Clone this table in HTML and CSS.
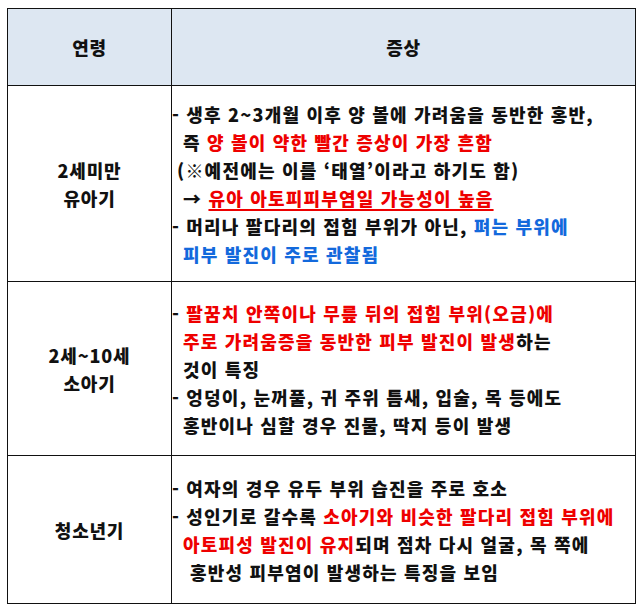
FILE: index.html
```html
<!DOCTYPE html>
<html lang="ko">
<head>
<meta charset="utf-8">
<link rel="stylesheet" href="styles.css">
</head>
<body>
<table class="sym">
  <tr class="head">
    <th class="age">연령</th>
    <th class="desc-h">증상</th>
  </tr>
  <tr class="r1">
    <td class="age">2세미만<br>유아기</td>
    <td class="desc">
      <div class="ln">- 생후 2~3개월 이후 양 볼에 가려움을 동반한 홍반,</div>
      <div class="ln in2">즉 <span class="red">양 볼이 약한 빨간 증상이 가장 흔함</span></div>
      <div class="ln in1">(※예전에는 이를 ‘태열’이라고 하기도 함)</div>
      <div class="ln in2">→ <span class="red ul">유아 아토피피부염일 가능성이 높음</span></div>
      <div class="ln">- 머리나 팔다리의 접힘 부위가 아닌, <span class="blue">펴는 부위에</span></div>
      <div class="ln in2"><span class="blue">피부 발진이 주로 관찰됨</span></div>
    </td>
  </tr>
  <tr class="r2">
    <td class="age">2세~10세<br>소아기</td>
    <td class="desc">
      <div class="ln">- <span class="red">팔꿈치 안쪽이나 무릎 뒤의 접힘 부위(오금)에</span></div>
      <div class="ln in2"><span class="red">주로 가려움증을 동반한 피부 발진이 발생</span>하는</div>
      <div class="ln in2">것이 특징</div>
      <div class="ln">- 엉덩이, 눈꺼풀, 귀 주위 틈새, 입술, 목 등에도</div>
      <div class="ln in2">홍반이나 심할 경우 진물, 딱지 등이 발생</div>
    </td>
  </tr>
  <tr class="r3">
    <td class="age">청소년기</td>
    <td class="desc">
      <div class="ln">- 여자의 경우 유두 부위 습진을 주로 호소</div>
      <div class="ln">- 성인기로 갈수록 <span class="red">소아기와 비슷한 팔다리 접힘 부위에</span></div>
      <div class="ln in2"><span class="red">아토피성 발진이 유지</span>되며 점차 다시 얼굴, 목 쪽에</div>
      <div class="ln in3">홍반성 피부염이 발생하는 특징을 보임</div>
    </td>
  </tr>
</table>
</body>
</html>
```

FILE: styles.css
```css
html, body {
  margin: 0;
  padding: 0;
  background: #ffffff;
}
body {
  padding: 8px 0 0 7px;
  font-family: "Noto Sans CJK KR", "Noto Sans", sans-serif;
  font-weight: 900;
  font-size: 18px;
  letter-spacing: 0.8px;
  color: #111111;
}
.sym {
  border-collapse: collapse;
  width: 629px;
  table-layout: fixed;
}
.sym th, .sym td {
  border: 1.5px solid #111111;
  padding: 0;
}
.sym th {
  background: #dde7f2;
  font-weight: 900;
  height: 76px;
  text-align: center;
  vertical-align: middle;
  line-height: 28px;
}
.sym .age {
  width: 163px;
  text-align: center;
  vertical-align: middle;
  line-height: 28px;
}
.r1 td { height: 195px; }
.r2 td { height: 173px; }
.r3 td { height: 147px; }
.desc {
  vertical-align: middle;
  padding-left: 5px;
  line-height: 28px;
  letter-spacing: 1.2px;
  white-space: nowrap;
}
.ln { display: block; }
.in1 { padding-left: 5px; }
.in2 { padding-left: 11px; }
.in3 { padding-left: 18px; }
.red { color: #ee0000; }
.blue { color: #1369dc; }
.ul {
  text-decoration: underline;
  text-decoration-thickness: 1.5px;
  text-underline-offset: 3px;
}
```
